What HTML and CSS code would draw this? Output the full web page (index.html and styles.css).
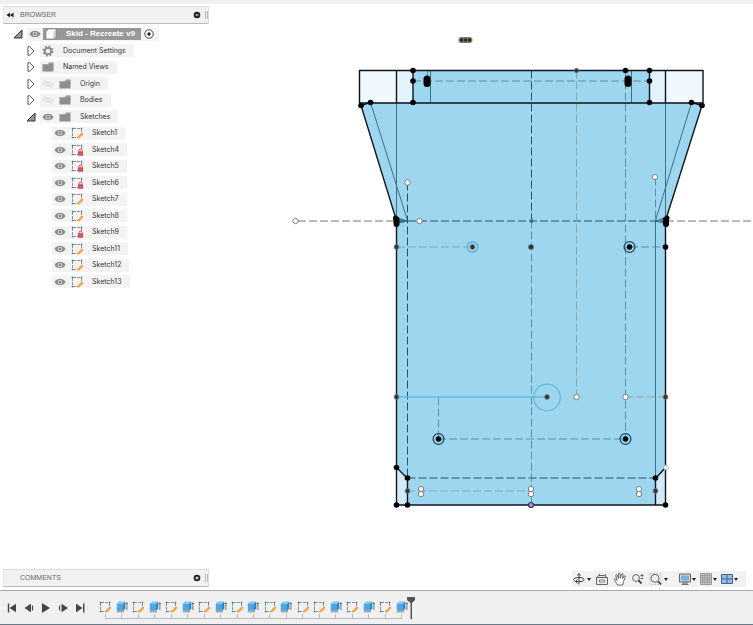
FILE: index.html
```html
<!DOCTYPE html>
<html lang="en">
<head>
	<meta charset="utf-8">
	<title>Skid - Recreate v9</title>
	<link rel="stylesheet" href="styles.css">
</head>
<body>
	<!-- icon set -->
	<svg class="defs" aria-hidden="true">
		<symbol id="open" viewBox="0 0 10 10"><path d="M9 1V9H1Z" fill="#999" stroke="#333"/></symbol>
		<symbol id="closed" viewBox="0 0 10 10"><path d="M2 .7H3.500L8 5L3.500 9.300H2Z" fill="#fff" stroke="#555"/></symbol>
		<symbol id="eye" viewBox="0 0 12 12"><path d="M.5 6C3 1.600 9 1.600 11.500 6C9 10.400 3 10.400 .5 6Z" fill="#8c8c8c"/><circle cx="6" cy="6" r="2.300" fill="#ddd"/><circle cx="6" cy="6" r="1.400" fill="#888"/></symbol>
		<symbol id="eye-off" viewBox="0 0 12 12"><path d="M1 6C3 3 9 3 11 6C9 9 3 9 1 6ZM2 2L10 10" fill="none" stroke="#dadada"/><circle cx="6" cy="6" r="1.500" fill="#ddd"/></symbol>
		<symbol id="folder" viewBox="0 0 12 12"><path d="M.5 3H6L7 1.500H11.500V10.500H.5Z" fill="#8e8e8e"/><path d="M1 3.500H6.500L7.500 2.500H11" fill="none" stroke="#b5b5b5" stroke-width=".6"/></symbol>
		<symbol id="gear" viewBox="0 0 12 12"><circle cx="6" cy="6" r="4.600" fill="none" stroke="#8b8b8b" stroke-width="1.800" stroke-dasharray="1.900 1.710"/><circle cx="6" cy="6" r="3.200" fill="none" stroke="#8b8b8b" stroke-width="1.800"/></symbol>
		<symbol id="cube" viewBox="0 0 12 12"><path d="M1 4L3.500 1H11V8L8.500 11H1Z" fill="#fff" stroke="#777" stroke-width=".6"/><path d="M8.500 11V4L11 1V8Z" fill="#ccc"/><path d="M1 4H8.500" stroke="#ddd" stroke-width=".6"/></symbol>
		<symbol id="frame" viewBox="0 0 12 12"><path d="M2 1.500H10M2 10.500H7M1.500 2V10M10.500 2V6" fill="none" stroke="#777" stroke-width=".8" stroke-dasharray="3 1"/><path d="M.8 .8H2.200V2.200H.8ZM9.800 .8H11.200V2.200H9.800ZM.8 9.800H2.200V11.200H.8Z" fill="#3f7396"/></symbol>
		<symbol id="sketch" viewBox="0 0 12 12"><use href="#frame"/><path d="M6.300 11.700L7 9.300L10 6.200L11.800 7.800L8.700 11Z" fill="#f2a73b"/><path d="M10 6.200L10.800 5.500L12 6.700L11.800 7.800Z" fill="#dc684d"/></symbol>
		<symbol id="locked" viewBox="0 0 12 12"><use href="#frame"/><path d="M8 7.500V6.300C8 4.700 11 4.700 11 6.300V7.500" fill="none" stroke="#c44"/><path d="M7 7.300H12V11.700H7Z" fill="#d4434b"/><path d="M8 9.500H11" stroke="#e58a8f" stroke-width=".7"/></symbol>
		<symbol id="extrude" viewBox="0 0 12 12"><path d="M.8 9H8V11.500H.8Z" fill="#aaa"/><path d="M.8 3L3 .8H9.200V7.300L7.200 9.500H.8Z" fill="#4ba7e5"/><path d="M.8 3L3 .8H9.200L7.200 3Z" fill="#85c9f3"/><path d="M7.200 3L9.200 .8V7.300L7.200 9.500Z" fill="#2e82bf"/><path d="M10.900 9V2.500" stroke="#555" stroke-width=".8"/><path d="M9.900 3L10.900 1L11.900 3Z" fill="#444"/></symbol>
		<symbol id="grip" viewBox="0 0 4 10"><path d="M.5 1V9M2.500 1V9" stroke="#aaa" stroke-width=".8"/></symbol>
	</svg>

	<div class="topstrip"></div>
	<main class="workspace">
		<aside class="sidebar">
			<div class="panel-head">
				<button aria-label="Collapse browser"><svg class="icon-s" viewBox="0 0 8 8"><path d="M4 1.500V6.500L.5 4ZM7.500 1.500V6.500L4 4Z" fill="#222"/></svg></button>
				<h2>BROWSER</h2>
				<button aria-label="Hide browser"><svg class="icon-s" viewBox="0 0 8 8"><circle cx="4" cy="4" r="3.300" fill="#222"/><path d="M2.500 4H5.500" stroke="#fff"/></svg></button>
				<svg class="grip"><use href="#grip"/></svg>
			</div>
			<ul class="tree">
				<li class="root"><button aria-label="Collapse"><svg><use href="#open"/></svg></button>
					<div class="item"><svg><use href="#eye"/></svg><div class="selected"><svg><use href="#cube"/></svg><span>Skid - Recreate v9</span></div><svg viewBox="0 0 12 12"><circle cx="6" cy="6" r="4.200" fill="#fff" stroke="#333" stroke-width=".9"/><circle cx="6" cy="6" r="1.700" fill="#222"/></svg></div></li>
				<li><button aria-label="Expand"><svg><use href="#closed"/></svg></button><div class="item"><svg><use href="#gear"/></svg><span>Document Settings</span></div></li>
				<li><button aria-label="Expand"><svg><use href="#closed"/></svg></button><div class="item"><svg><use href="#folder"/></svg><span>Named Views</span></div></li>
				<li><button aria-label="Expand"><svg><use href="#closed"/></svg></button><div class="item"><svg><use href="#eye-off"/></svg><svg><use href="#folder"/></svg><span>Origin</span></div></li>
				<li><button aria-label="Expand"><svg><use href="#closed"/></svg></button><div class="item"><svg><use href="#eye-off"/></svg><svg><use href="#folder"/></svg><span>Bodies</span></div></li>
				<li><button aria-label="Collapse"><svg><use href="#open"/></svg></button><div class="item"><svg><use href="#eye"/></svg><svg><use href="#folder"/></svg><span>Sketches</span></div></li>
				<li class="leaf"><div class="item"><svg><use href="#eye"/></svg><svg><use href="#sketch"/></svg><span>Sketch1</span></div></li>
				<li class="leaf"><div class="item"><svg><use href="#eye"/></svg><svg><use href="#locked"/></svg><span>Sketch4</span></div></li>
				<li class="leaf"><div class="item"><svg><use href="#eye"/></svg><svg><use href="#locked"/></svg><span>Sketch5</span></div></li>
				<li class="leaf"><div class="item"><svg><use href="#eye"/></svg><svg><use href="#locked"/></svg><span>Sketch6</span></div></li>
				<li class="leaf"><div class="item"><svg><use href="#eye"/></svg><svg><use href="#sketch"/></svg><span>Sketch7</span></div></li>
				<li class="leaf"><div class="item"><svg><use href="#eye"/></svg><svg><use href="#sketch"/></svg><span>Sketch8</span></div></li>
				<li class="leaf"><div class="item"><svg><use href="#eye"/></svg><svg><use href="#locked"/></svg><span>Sketch9</span></div></li>
				<li class="leaf"><div class="item"><svg><use href="#eye"/></svg><svg><use href="#sketch"/></svg><span>Sketch11</span></div></li>
				<li class="leaf"><div class="item"><svg><use href="#eye"/></svg><svg><use href="#sketch"/></svg><span>Sketch12</span></div></li>
				<li class="leaf"><div class="item"><svg><use href="#eye"/></svg><svg><use href="#sketch"/></svg><span>Sketch13</span></div></li>
			</ul>
			<div class="panel-head comments">
				<h2>COMMENTS</h2>
				<button aria-label="Show comments"><svg class="icon-s" viewBox="0 0 8 8"><circle cx="4" cy="4" r="3.300" fill="#222"/><path d="M2.500 4H5.500M4 2.500V5.500" stroke="#fff"/></svg></button>
				<svg class="grip"><use href="#grip"/></svg>
			</div>
		</aside>

		<section class="view">
			<svg class="canvas" viewBox="209 4 544 566" role="img" aria-label="Skid sketch">
				<!-- profiles -->
				<path d="M360 70H397V102H360ZM666 70H703V102H666Z" fill="#f0f8fe"/>
				<path d="M397 70H413V102H397ZM650 70H666V102H650Z" fill="#e3f2fb"/>
				<path d="M413 70H650V102H702L702 105L666 220V504.500H397V220L361 105L370 102H413Z" fill="#9fd6ef"/>
				<path d="M397 467L407.500 478V504H397ZM666 467L655.500 478V504H666Z" fill="#d2eaf7"/>

				<!-- thin edges -->
				<g class="thin">
					<path d="M396.500 102V220M665.500 102V220M370.500 102L407.500 220M691.500 102L655.500 220M430.500 70V102M631.500 70V102M655.500 220V478"/>
					<path d="M396.500 217L407.500 220.500L396.500 223ZM665.500 217L655.500 220.500L665.500 223Z" fill="#5e9ab5"/>
				</g>

				<!-- construction lines -->
				<g class="dash dark">
					<path d="M531.500 70V220M397 220.500H666M407.500 182V478M407.500 477.500H655"/>
				</g>
				<g class="dash mid">
					<path d="M413 80.500H650M531.500 220V504M625.500 70V438M427.500 70V80M655.500 177V220M438.500 397V438M438 438.500H625M630 246.500H665"/>
				</g>
				<g class="dash gray">
					<path d="M298 220.500H397M666 220.500H753"/>
				</g>
				<g class="dash tan">
					<path d="M576.500 70V397M397 246.500H472M625 396.500H665M407 490.500H531"/>
				</g>
				<path d="M397 396.500H547" stroke="#62b9e0" stroke-width="1.300"/>
				<circle cx="547" cy="397" r="13.300" fill="none" stroke="#62b9e0" stroke-width="1.300"/>
				<circle cx="472.500" cy="246.500" r="5.300" fill="none" stroke="#58b4dd" stroke-width="1.400"/>

				<!-- outline -->
				<g class="edge">
					<path d="M359.500 102.500V70H703V102.500H359.500M396.500 70V102M413 70V102M649.500 70V102M665.500 70V102"/>
					<path d="M370 102L361 105L396.500 220V504.500H665.500V220L702 105L692 102M396.500 467L407.500 478V504M665.500 467L655.500 478V504"/>
				</g>

				<!-- fixed points -->
				<g fill="#000">
					<circle cx="413" cy="70" r="2.800"/><circle cx="413" cy="80.500" r="2.800"/><circle cx="413" cy="102" r="2.800"/>
					<circle cx="649.500" cy="70" r="2.800"/><circle cx="649.500" cy="80.500" r="2.800"/><circle cx="649.500" cy="102" r="2.800"/>
					<circle cx="625.500" cy="70" r="2.800"/>
					<circle cx="361" cy="105" r="2.800"/><circle cx="370.500" cy="102" r="2.800"/>
					<circle cx="702" cy="105" r="2.800"/><circle cx="691.500" cy="102" r="2.800"/>
					<rect x="423.500" y="75" width="7" height="11.500" rx="3.500"/><rect x="624.500" y="75" width="7" height="11.500" rx="3.500"/>
					<rect x="393.500" y="216" width="6" height="10.500" rx="3"/><rect x="663" y="216" width="6" height="10.500" rx="3"/>
					<circle cx="395.500" cy="217.500" r="2.500"/><circle cx="667" cy="217.500" r="2.500"/>
					<circle cx="665.500" cy="246.500" r="2.800"/><circle cx="629.500" cy="246.500" r="2.800"/>
					<circle cx="438.500" cy="438.500" r="2.800"/><circle cx="625.500" cy="438.500" r="2.800"/>
					<circle cx="396.500" cy="467" r="2.800"/><circle cx="407.500" cy="477.500" r="2.800"/><circle cx="655.500" cy="477.500" r="2.800"/>
					<circle cx="396.500" cy="504.500" r="2.800"/><circle cx="407.500" cy="504.500" r="2.800"/><circle cx="665.500" cy="504.500" r="2.800"/>
				</g>
				<g fill="none" stroke="#16435a" stroke-width="1.200">
					<circle cx="629.500" cy="246.500" r="5.400"/><circle cx="438.500" cy="438.500" r="5.400"/><circle cx="625.500" cy="438.500" r="5.400"/>
				</g>
				<g fill="#333" stroke="#777" stroke-width=".8">
					<circle cx="576.500" cy="70" r="2.200"/><circle cx="396.500" cy="246.500" r="2.400"/><circle cx="472.500" cy="246.500" r="2.400"/>
					<circle cx="531" cy="246.500" r="2.600"/><circle cx="396.500" cy="396.500" r="2.400"/><circle cx="547" cy="396.500" r="2.400"/>
					<circle cx="665.500" cy="396.500" r="2.400"/><circle cx="407.500" cy="490.500" r="2.400"/><circle cx="655.500" cy="490.500" r="2.400"/>
				</g>
				<circle cx="531.500" cy="220.500" r="2" fill="#3d7590"/>

				<!-- free points -->
				<g fill="#fff" stroke="#666" stroke-width=".8">
					<circle cx="295.500" cy="220.500" r="2.700"/><circle cx="419.500" cy="220.500" r="2.700"/>
					<circle cx="407.500" cy="182" r="2.700"/><circle cx="655" cy="176.500" r="2.700"/>
					<circle cx="576.500" cy="396.500" r="2.700"/><circle cx="625.500" cy="396.500" r="2.700"/>
					<circle cx="421" cy="488.500" r="2.700"/><circle cx="421" cy="493.500" r="2.700"/>
					<circle cx="531" cy="488.500" r="2.700"/><circle cx="531" cy="493.500" r="2.700"/>
					<circle cx="639" cy="488.500" r="2.700"/><circle cx="639" cy="493.500" r="2.700"/>
				</g>
				<circle cx="666" cy="467" r="2.400" fill="#e8f4fb" stroke="#aab" stroke-width=".8"/>
				<circle cx="531" cy="504.500" r="2.500" fill="#a79ac0" stroke="#3c2f66" stroke-width="1.200"/>

				<!-- constraint marker -->
				<rect x="458.500" y="36.500" width="14" height="6" rx="3" fill="#82786c"/>
				<g fill="#2e2924"><circle cx="461.500" cy="39.500" r="1.700"/><circle cx="465.500" cy="39.500" r="1.700"/><circle cx="469.500" cy="39.500" r="1.700"/></g>
			</svg>

			<nav class="navbar" aria-label="View tools">
				<div class="tools">
					<button class="drop" aria-label="Orbit"><svg viewBox="0 0 14 14"><path d="M7 2V12.500M5.500 3.500L7 1.500L8.500 3.500M3.500 9.500C0 8 1.500 5.500 7 5.500S13.500 8 10 9.500H3.500M5.500 7.700L3.500 9.500L5.500 11.300" fill="none" stroke="#444"/></svg></button>
					<button aria-label="Look at"><svg viewBox="0 0 14 14"><path d="M1.500 5.500H12.500V12.500H1.500ZM2 5.500L3.500 3.500H9L10.500 2.500L11 5.500M4.500 3.500V2" fill="#e9e9e9" stroke="#666"/><path d="M4.500 8H9.500V10H4.500Z" fill="#fff" stroke="#666" stroke-width=".8"/></svg></button>
					<button aria-label="Pan"><svg viewBox="0 0 14 14"><path d="M4.500 13C4 11 1.500 9 1.300 7.200C2 6.300 3 7.300 4 8.500L2.700 3.500C3 2.300 4 2.500 4.300 3.500L5.500 6.500L5.300 2C5.500 .7 6.800 .8 7 2L7.300 6L8.500 2C9 1 10 1.300 10 2.500L9.500 6.500L11.300 4C12 3.300 12.800 4 12.300 5L10.500 9.500L9.800 13Z" fill="#fff" stroke="#555" stroke-width=".9"/></svg></button>
					<button aria-label="Zoom"><svg viewBox="0 0 14 14"><circle cx="5" cy="6" r="3.400" fill="#e7f3f7" stroke="#666"/><path d="M7.500 8.500L10.500 11.500" stroke="#444" stroke-width="1.800"/><path d="M9.500 3.500H12.500M11 2V5M9.500 6.500H12.500" stroke="#555" stroke-width=".9"/></svg></button>
					<button class="drop" aria-label="Zoom window"><svg viewBox="0 0 14 14"><path d="M1 1.500H12V12.500H1Z" fill="none" stroke="#bbb" stroke-width=".8" stroke-dasharray="2 1"/><circle cx="6" cy="6.300" r="4" fill="#e7f3f7" stroke="#666"/><path d="M9 9.300L12 12.300" stroke="#444" stroke-width="1.800"/></svg></button>
				</div>
				<div class="tools display">
					<button class="drop" aria-label="Display settings"><svg viewBox="0 0 14 14"><path d="M1.500 2H12.500V10H1.500Z" fill="#d8d8d8" stroke="#666"/><path d="M3 3.500H11V8.500H3Z" fill="#79aee3"/><path d="M5 10H9V12H5ZM3.500 12.500H10.500" fill="#ccc" stroke="#777"/></svg></button>
					<button class="drop" aria-label="Grid settings"><svg viewBox="0 0 14 14"><path d="M1.500 1.500H12.500V12.500H1.500ZM3.700 1.500V12.500M5.900 1.500V12.500M8.100 1.500V12.500M10.300 1.500V12.500M1.500 3.700H12.500M1.500 5.900H12.500M1.500 8.100H12.500M1.500 10.300H12.500" fill="#ddd" stroke="#888" stroke-width=".8"/></svg></button>
					<button class="drop" aria-label="Viewports"><svg viewBox="0 0 14 14"><path d="M1.500 2.500H12.500V11.500H1.500ZM7 2.500V11.500M1.500 7H12.500" fill="#92bff0" stroke="#466380"/></svg></button>
				</div>
			</nav>
		</section>
	</main>

	<footer class="timeline">
		<div class="player">
			<button aria-label="Go to start"><svg viewBox="0 0 12 12"><path d="M2.500 1.500V10.500" stroke="#444" stroke-width="1.400"/><path d="M10 1.800V10.200L3.500 6Z" fill="#444"/></svg></button>
			<button aria-label="Step back"><svg viewBox="0 0 12 12"><path d="M8 1.800V10.200L1.500 6Z" fill="#444"/><path d="M9.500 3.500V8.500" stroke="#444" stroke-width="1.200"/></svg></button>
			<button aria-label="Play"><svg viewBox="0 0 12 12"><path d="M2 1V11L10 6Z" fill="#444"/></svg></button>
			<button aria-label="Step forward"><svg viewBox="0 0 12 12"><path d="M4.500 1.800V10.200L11 6Z" fill="#444"/><path d="M2.500 3.500V8.500" stroke="#444" stroke-width="1.200"/></svg></button>
			<button aria-label="Go to end"><svg viewBox="0 0 12 12"><path d="M9.800 1.500V10.500" stroke="#444" stroke-width="1.400"/><path d="M2 1.800V10.200L8.500 6Z" fill="#444"/></svg></button>
		</div>
		<ol class="steps">
			<li><svg><use href="#sketch"/></svg></li>
			<li><svg><use href="#extrude"/></svg></li>
			<li><svg><use href="#sketch"/></svg></li>
			<li><svg><use href="#extrude"/></svg></li>
			<li><svg><use href="#sketch"/></svg></li>
			<li><svg><use href="#extrude"/></svg></li>
			<li><svg><use href="#sketch"/></svg></li>
			<li><svg><use href="#extrude"/></svg></li>
			<li><svg><use href="#sketch"/></svg></li>
			<li><svg><use href="#extrude"/></svg></li>
			<li><svg><use href="#sketch"/></svg></li>
			<li><svg><use href="#extrude"/></svg></li>
			<li><svg><use href="#sketch"/></svg></li>
			<li><svg><use href="#sketch"/></svg></li>
			<li><svg><use href="#extrude"/></svg></li>
			<li><svg><use href="#sketch"/></svg></li>
			<li><svg><use href="#extrude"/></svg></li>
			<li><svg><use href="#sketch"/></svg></li>
			<li><svg><use href="#extrude"/></svg></li>
		</ol>
		<svg class="marker" viewBox="0 0 8 24"><path d="M0 1H8V4L5 7V23H3.500V7L0 4Z" fill="#555"/></svg>
	</footer>
</body>
</html>
```
FILE: styles.css
```css
*{
	margin: 0;
	padding: 0;
	box-sizing: border-box;
}
body{
	display: flex;
	flex-direction: column;
	height: 100vh;
	background-color: #fff;
	color: #333;
	font-family: Inter, "Liberation Sans", sans-serif;
	font-size: 7px;
	line-height: 12px;
}
button{
	display: flex;
	align-items: center;
	border: none;
	background: none;
	flex: none;
}
svg{
	display: block;
	flex: none;
}
ul, ol{
	list-style: none;
}
.defs{
	position: absolute;
	width: 0;
	height: 0;
}
.topstrip{
	height: 4px;
	background-color: #f0f0f0;
}
.workspace{
	flex: 1;
	min-height: 0;
	display: flex;
}

/* browser panel */
.sidebar{
	width: 209px;
	padding: 2px 0 3px 3px;
	display: flex;
	flex-direction: column;
}
.panel-head{
	display: flex;
	align-items: center;
	gap: 6px;
	height: 18px;
	padding-left: 2px;
	background-color: #f1f1f1;
	border: 1px solid #ddd;
	border-bottom-color: #bbb;
	border-left-color: #e6e6e6;
}
.panel-head h2{
	flex: 1;
	font: 7px/12px "Liberation Sans", sans-serif;
	color: #666;
}
.comments{
	margin-top: auto;
	padding-left: 16px;
}
.icon-s{
	width: 8px;
	height: 8px;
}
.grip{
	width: 4px;
	height: 10px;
	margin-left: -2px;
	margin-right: -1px;
}
.tree{
	display: grid;
	grid-template-rows: repeat(16, 1fr);
	height: 264px;
	margin-top: 2px;
}
.tree li{
	display: flex;
	align-items: center;
	gap: 4px;
	padding-left: 23px;
}
.tree li.root{
	padding-left: 10px;
}
.tree li.leaf{
	padding-left: 49px;
}
.tree button svg{
	width: 10px;
	height: 10px;
}
.item{
	display: flex;
	align-items: center;
	gap: 5px;
	height: 13px;
	padding: 0 8px 0 2px;
	background-color: #f3f3f3;
}
.item svg{
	width: 12px;
	height: 12px;
}
.item span{
	margin-left: 4px;
}
.root .item{
	gap: 2px;
	padding-right: 4px;
}
.selected{
	display: flex;
	align-items: center;
	gap: 5px;
	height: 12px;
	padding: 0 6px 0 2px;
	background-color: #989898;
	color: #fff;
	font-family: "Liberation Sans", sans-serif;
	font-size: 8px;
	font-weight: bold;
}

/* drawing area */
.view{
	flex: 1;
	min-width: 0;
	display: flex;
	flex-direction: column;
}
.canvas{
	flex: 1;
	min-height: 0;
	width: 100%;
}
.thin{
	fill: none;
	stroke: #39708a;
	stroke-width: 1;
}
.edge{
	fill: none;
	stroke: #0b151b;
	stroke-width: 1.4;
}
.dash{
	fill: none;
	stroke-width: 1;
	stroke-dasharray: 8 3;
}
.dark{
	stroke: #265267;
}
.mid{
	stroke: #568fa9;
}
.gray{
	stroke: #777;
}
.tan{
	stroke: #8fa5a5;
}
.navbar{
	align-self: flex-end;
	display: flex;
	align-items: center;
	gap: 10px;
	height: 16px;
	margin: 0 7px 3px 0;
	padding-right: 8px;
	background-color: #f1f1f1;
}
.tools{
	display: flex;
	gap: 4px;
}
.display{
	gap: 3px;
}
.navbar svg{
	width: 14px;
	height: 14px;
}
.drop::after{
	content: "";
	margin-left: 1px;
	border: 2px solid transparent;
	border-top: 3px solid #222;
	border-bottom: none;
}
.display .drop::after{
	margin-left: 0;
}

/* timeline */
.timeline{
	display: flex;
	align-items: center;
	height: 35px;
	padding-left: 6px;
	background-color: #f0f0f0;
	border-top: 1px solid #aaa;
	border-bottom: 1px solid #687a88;
}
.player{
	display: flex;
	gap: 5px;
}
.player svg{
	width: 12px;
	height: 12px;
}
.steps{
	display: grid;
	grid-template-columns: repeat(19, 1fr);
	width: 313px;
	margin-left: 11px;
	padding-top: 4px;
}
.steps li{
	display: flex;
	flex-direction: column;
	align-items: center;
}
.steps li::after{
	content: "";
	width: 1px;
	height: 4px;
	background-color: #bbb;
}
.steps::after{
	content: "";
	grid-column: 1 / -1;
	height: 1px;
	margin: 0 8px;
	background-color: #bbb;
}
.steps svg{
	width: 12px;
	height: 12px;
	margin-bottom: 1px;
}
.marker{
	width: 8px;
	height: 24px;
	margin-left: -3px;
}
```
